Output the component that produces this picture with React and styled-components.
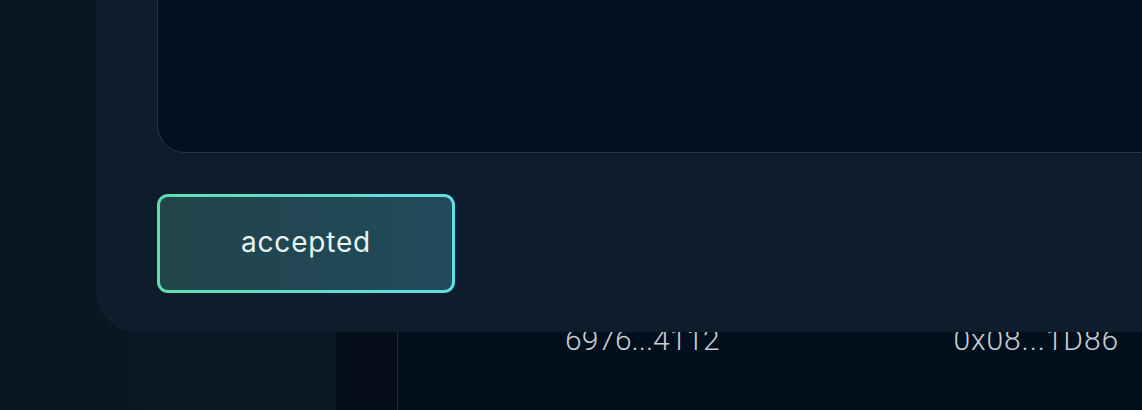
import React from "react";
import styled, { createGlobalStyle } from "styled-components";

const Global = createGlobalStyle`
  html, body { margin: 0; padding: 0; background: #0a1724; }
  * { box-sizing: border-box; }
`;

const Page = styled.div`
  position: relative;
  width: 1142px;
  height: 410px;
  overflow: hidden;
  display: flex;
  background: #0a1724;
`;

const Sidebar = styled.aside`
  width: 336px;
  flex: none;
  background: linear-gradient(90deg, #0a1622 0%, #0a1825 100%);
`;

const Main = styled.main`
  flex: 1;
  background: #040e1a;
  padding-left: 61px;
  display: flex;
`;

const TableCard = styled.section`
  flex: 1;
  background: #020f1d;
  border-left: 1px solid #1f2c3c;
  display: flex;
  flex-direction: column;
  padding-top: 322px;
`;

const Row = styled.div`
  display: grid;
  grid-template-columns: 167px 158px 1fr;
  align-items: baseline;
  font-family: Roboto, "Liberation Sans", sans-serif;
  font-weight: 300;
  font-size: 30px;
  color: #c9cdd3;
  padding-right: 23px;
`;

const Cell = styled.div`
  text-align: ${(p) => (p.$right ? "right" : "left")};
  white-space: nowrap;
  letter-spacing: ${(p) => (p.$right ? "0.9px" : "0")};
`;

const Modal = styled.div`
  position: absolute;
  left: 96px;
  top: -60px;
  width: 1120px;
  height: 392px;
  background: #0e1c2c;
  border-radius: 40px;
  padding: 0 0 39px 61px;
  display: flex;
  flex-direction: column;
  gap: 41px;
`;

const Preview = styled.div`
  flex: 1;
  background: #02101f;
  border: 1px solid #26354a;
  border-radius: 28px;
  margin-right: -80px;
`;

const StatusButton = styled.button`
  width: 298px;
  height: 99px;
  border-radius: 11px;
  border: 3px solid transparent;
  background:
    linear-gradient(90deg, #22444a 0%, #214a5b 100%) padding-box,
    linear-gradient(90deg, #5edfb0 0%, #5fdfe6 100%) border-box;
  color: #e4f5f4;
  font-family: Inter, "Open Sans", sans-serif;
  font-size: 28px;
  letter-spacing: 0.8px;
  font-weight: 400;
  display: flex;
  align-items: center;
  justify-content: center;
  padding: 0 0 3px;
  cursor: pointer;
`;

export default function App() {
  return (
    <>
      <Global />
      <Page>
        <Sidebar />
        <Main>
          <TableCard>
            <Row>
              <Cell />
              <Cell>6976...4112</Cell>
              <Cell $right>0x08...1D86</Cell>
            </Row>
          </TableCard>
        </Main>
        <Modal>
          <Preview />
          <StatusButton>accepted</StatusButton>
        </Modal>
      </Page>
    </>
  );
}
